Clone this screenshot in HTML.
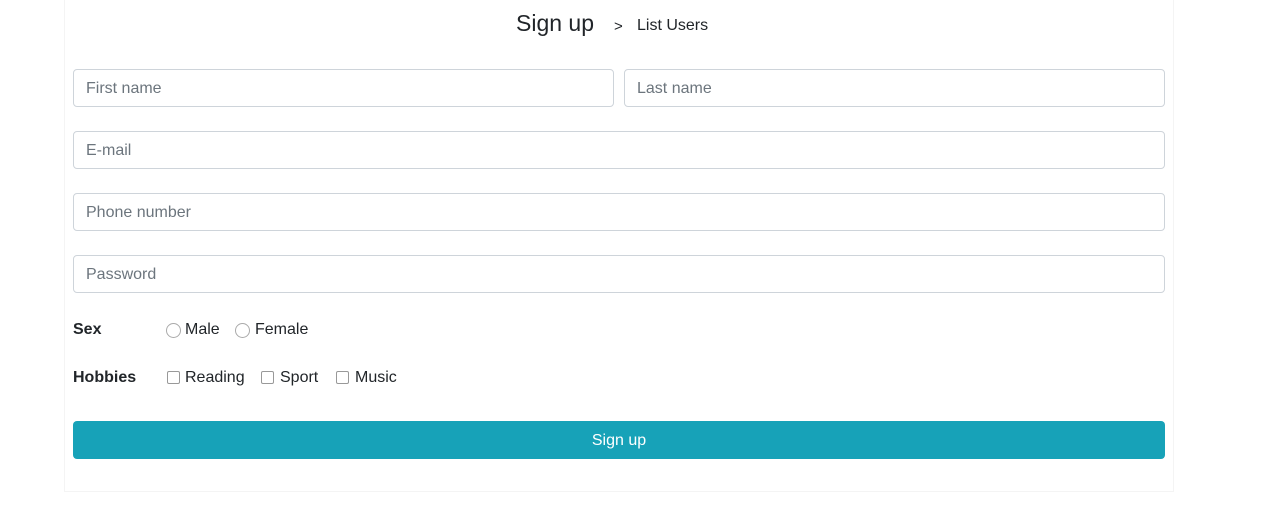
<!DOCTYPE html>
<html><head><style>
body{margin:0;width:1276px;height:518px;background:#fff;font-family:"Liberation Sans",sans-serif;color:#212529;position:relative;overflow:hidden}
.box{position:absolute;left:64px;top:-2px;width:1110px;height:494px;border:1px solid #f4f4f4;box-sizing:border-box}
.in{position:absolute;height:38px;border:1px solid #ced4da;border-radius:4px;box-sizing:border-box;font-size:16px;color:#6c757d;padding-left:12px;line-height:38px}
.t{position:absolute;font-size:16px}
.rad{position:absolute;width:15px;height:15px;border:1px solid #aaa;border-radius:50%;box-sizing:border-box;top:323px}
.cb{position:absolute;width:13px;height:13px;border:1px solid #999;border-radius:2px;box-sizing:border-box;top:371px}
</style></head><body>
<div class="box"></div>
<div class="t" style="left:516px;top:10px;font-size:23px">Sign up</div>
<div class="t" style="left:614px;top:18px;font-size:15px">&gt;</div>
<div class="t" style="left:637px;top:17px;">List Users</div>
<div class="in" style="left:73px;top:69px;width:541px">First name</div>
<div class="in" style="left:624px;top:69px;width:541px">Last name</div>
<div class="in" style="left:73px;top:131px;width:1092px">E-mail</div>
<div class="in" style="left:73px;top:193px;width:1092px">Phone number</div>
<div class="in" style="left:73px;top:255px;width:1092px">Password</div>
<div class="t" style="left:73px;top:321px;font-weight:bold;font-size:16px">Sex</div>
<div class="rad" style="left:166px"></div><div class="t" style="left:185px;top:321px">Male</div>
<div class="rad" style="left:235px"></div><div class="t" style="left:255px;top:321px">Female</div>
<div class="t" style="left:73px;top:369px;font-weight:bold;font-size:16px">Hobbies</div>
<div class="cb" style="left:167px"></div><div class="t" style="left:185px;top:369px">Reading</div>
<div class="cb" style="left:261px"></div><div class="t" style="left:280px;top:369px">Sport</div>
<div class="cb" style="left:336px"></div><div class="t" style="left:355px;top:369px">Music</div>
<div style="position:absolute;left:73px;top:421px;width:1092px;height:38px;background:#17a2b8;border-radius:4px;color:#fff;text-align:center;line-height:39px;font-size:16px">Sign up</div>
</body></html>
